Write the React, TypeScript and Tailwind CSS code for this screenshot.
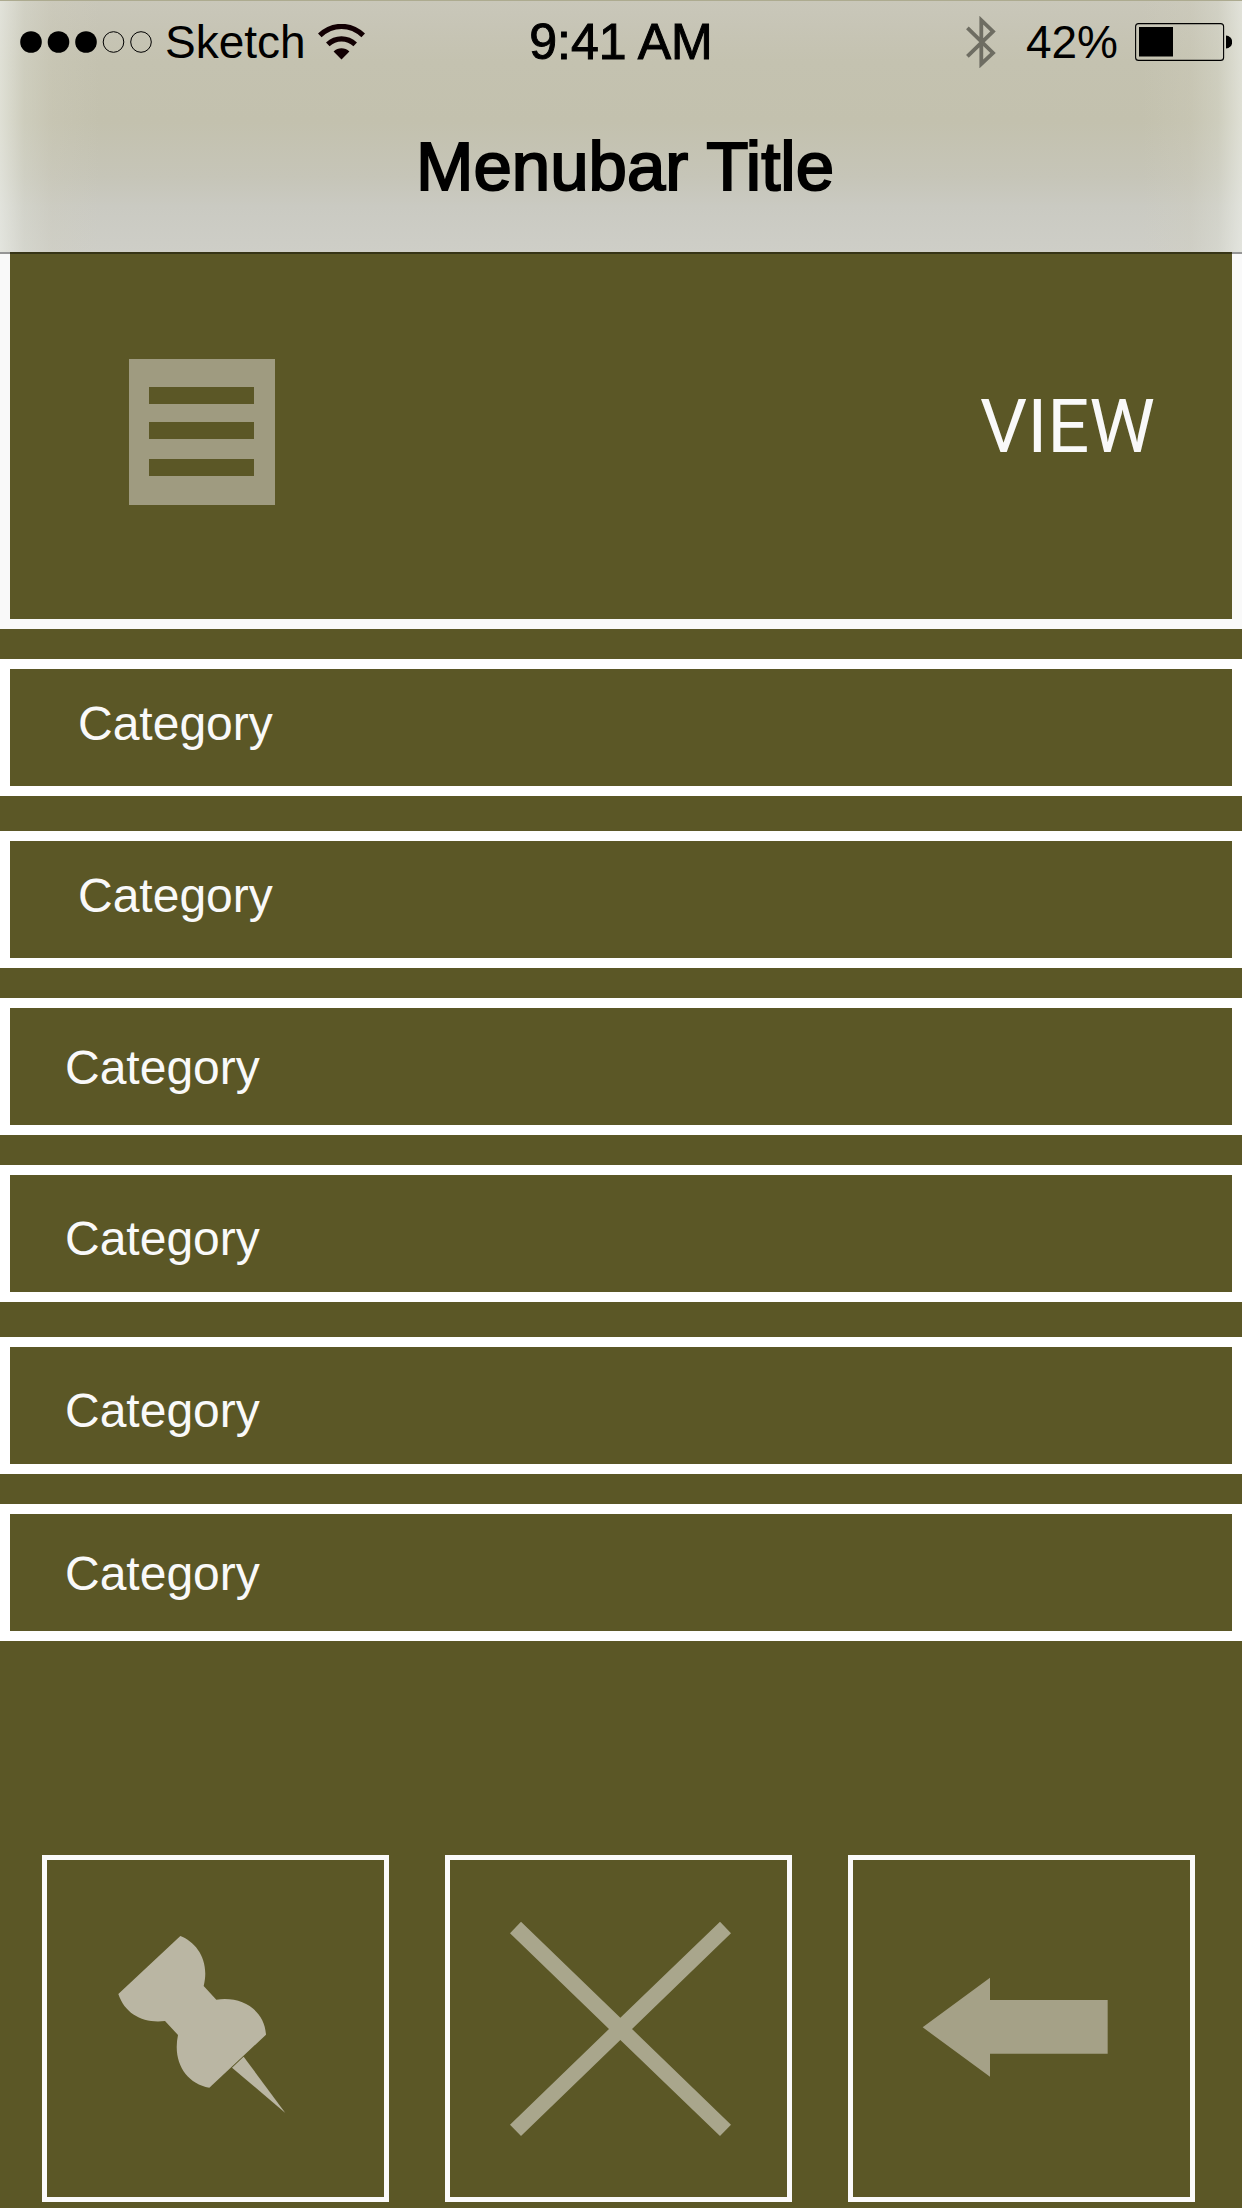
import type { ReactNode } from "react";

type Category = { id: number; label: string; spacing: string; inset: string };

const categories: Category[] = [
  { id: 1, label: "Category", spacing: "mt-[30px]", inset: "pt-[31px] pb-[38px] pl-[68px]" },
  { id: 2, label: "Category", spacing: "mt-[35px]", inset: "pt-[31px] pb-[38px] pl-[68px]" },
  { id: 3, label: "Category", spacing: "mt-[30px]", inset: "pt-[36px] pb-[33px] pl-[55px]" },
  { id: 4, label: "Category", spacing: "mt-[30px]", inset: "pt-[40px] pb-[29px] pl-[55px]" },
  { id: 5, label: "Category", spacing: "mt-[35px]", inset: "pt-[40px] pb-[29px] pl-[55px]" },
  { id: 6, label: "Category", spacing: "mt-[30px]", inset: "pt-[36px] pb-[33px] pl-[55px]" },
];

function SignalDots() {
  return (
    <svg className="h-[22px] w-[133px]" viewBox="0 0 133 22" role="img" aria-label="Signal strength 3 of 5">
      <circle cx="11" cy="11" r="10.8" />
      <circle cx="38.5" cy="11" r="10.8" />
      <circle cx="66" cy="11" r="10.8" />
      <circle cx="93.5" cy="11" r="10.3" fill="none" stroke="#000" />
      <circle cx="121" cy="11" r="10.3" fill="none" stroke="#000" />
    </svg>
  );
}

function WifiIcon() {
  return (
    <svg className="h-9 w-[47px]" viewBox="0 0 47 36" fill="none" stroke="#120003" role="img" aria-label="Wi-Fi">
      <path d="M1.8 11.4 C14.5 -0.6 32.5 -0.6 45.2 11.4" strokeWidth="5.2" />
      <path d="M9.8 20.4 C17.7 13 29.3 13 37.2 20.4" strokeWidth="5.2" />
      <path d="M15.6 27.4 C20 23.2 27 23.2 31.4 27.4 L23.5 35.6 Z" fill="#120003" stroke="none" />
    </svg>
  );
}

function BluetoothIcon() {
  return (
    <svg className="h-[52px] w-[30px]" viewBox="0 0 30 52" fill="none" stroke="#6e6d62" strokeWidth="3.8" role="img" aria-label="Bluetooth">
      <path d="M1.4 11.8 L27 37 L15.3 48 V4.2 L27 15.4 L1.4 40.4" />
    </svg>
  );
}

function BatteryIcon() {
  return (
    <svg className="h-[38px] w-[97px]" viewBox="0 0 97 38" role="img" aria-label="Battery">
      <rect x="0.6" y="0.6" width="88" height="36.8" rx="3" fill="none" stroke="#000" strokeWidth="1.1" />
      <rect x="4" y="4" width="34" height="29.5" />
      <path d="M91 12.5 A6.2 6.5 0 0 1 91 25.5 Z" />
    </svg>
  );
}

function MenuIcon() {
  return (
    <svg className="size-full" viewBox="0 0 146 146" fill="#5b5726" aria-hidden="true">
      <rect x="20" y="28" width="105" height="17" />
      <rect x="20" y="63" width="105" height="17" />
      <rect x="20" y="100" width="105" height="17" />
    </svg>
  );
}

function PinIcon() {
  return (
    <svg className="size-full" viewBox="51 60 1011 1011" fill="#bab6a3" aria-hidden="true">
      <path d="M451 288 C500 307 540 362 521 438 L559 479 C638 467 704 512 708 584 L538 743 C468 730 427 666 444 585 L405 543 C341 551 285 523 265 462 Z" />
      <path d="M641 650 L766 819 L606 683 Z" />
    </svg>
  );
}

function CloseIcon() {
  return (
    <svg className="size-full" viewBox="63 60 1011 1011" fill="#a9a68c" aria-hidden="true">
      <path d="M276 245 L574 533 L873 245 L906 280 L609 567 L906 854 L873 888 L574 600 L276 888 L243 854 L540 567 L243 280 Z" />
    </svg>
  );
}

function BackIcon() {
  return (
    <svg className="size-full" viewBox="66 60 1011 1011" fill="#a5a187" aria-hidden="true">
      <path d="M275 562 L477 413 V480 H830 V641 H477 V710 Z" />
    </svg>
  );
}

function ActionButton({ label, children }: { label: string; children: ReactNode }) {
  return (
    <button type="button" aria-label={label} className="aspect-square border-5 border-[#fafafa]">
      {children}
    </button>
  );
}

function Header() {
  return (
    <header className="relative z-10 border-t border-[#adab90] bg-[#c4c2b0] bg-[linear-gradient(to_right,rgba(238,240,234,0.65)_0,rgba(224,226,215,0.36)_24px,rgba(210,208,192,0.25)_52px,transparent_100px),linear-gradient(to_left,rgba(238,240,234,0.65)_0,rgba(224,226,215,0.36)_24px,rgba(210,208,192,0.25)_52px,transparent_100px),linear-gradient(to_bottom,#c9c7ba_0,#c4c2b0_24%,#c3c1ae_48%,#c6c5b8_70%,#cacac2_82%,#cecec7_100%)] text-black shadow-[0_2px_0_rgba(0,0,0,0.4)]">
      <div className="grid h-[82px] grid-cols-[1fr_auto_1fr] items-center px-[10px] text-[46px] leading-[56px]">
        <div className="flex items-center pl-[10px]">
          <SignalDots />
          <span className="mr-3 ml-3">Sketch</span>
          <WifiIcon />
        </div>
        <time className="text-[50px] [-webkit-text-stroke:1px_black]">9:41 AM</time>
        <div className="flex items-center justify-end">
          <BluetoothIcon />
          <span className="mr-[17px] ml-[30px]">42%</span>
          <BatteryIcon />
        </div>
      </div>
      <h1 className="pt-11 pb-[45px] pl-2 text-center text-[69px] leading-[80px] [-webkit-text-stroke:2px_black]">
        Menubar Title
      </h1>
    </header>
  );
}

export default function App() {
  return (
    <div className="flex min-h-screen flex-col bg-[#5b5726] font-['Liberation_Sans',Arial,sans-serif]">
      <Header />
      <main className="flex grow flex-col">
        <section className="flex items-start justify-between border-x-10 border-b-10 border-[#f9f9f9] pt-[107px] pr-[77px] pb-[114px] pl-[119px]">
          <button type="button" aria-label="Menu" className="size-[146px] bg-[#9f9b80]">
            <MenuIcon />
          </button>
          <button type="button" className="pt-[26px] font-['Roboto','Liberation_Sans',sans-serif] text-[74px] leading-[84px] text-[#f9f9f9]">
            VIEW
          </button>
        </section>
        <ul>
          {categories.map((category) => (
            <li key={category.id} className={category.spacing}>
              <button
                type="button"
                className={`block w-full border-10 border-white text-left text-[48px] leading-[48px] text-[#f9f9f9] ${category.inset}`}
              >
                {category.label}
              </button>
            </li>
          ))}
        </ul>
        <nav aria-label="Actions" className="mt-auto grid grid-cols-3 gap-14 pt-16 pr-[47px] pb-[6px] pl-[42px]">
          <ActionButton label="Pin">
            <PinIcon />
          </ActionButton>
          <ActionButton label="Close">
            <CloseIcon />
          </ActionButton>
          <ActionButton label="Back">
            <BackIcon />
          </ActionButton>
        </nav>
      </main>
    </div>
  );
}
